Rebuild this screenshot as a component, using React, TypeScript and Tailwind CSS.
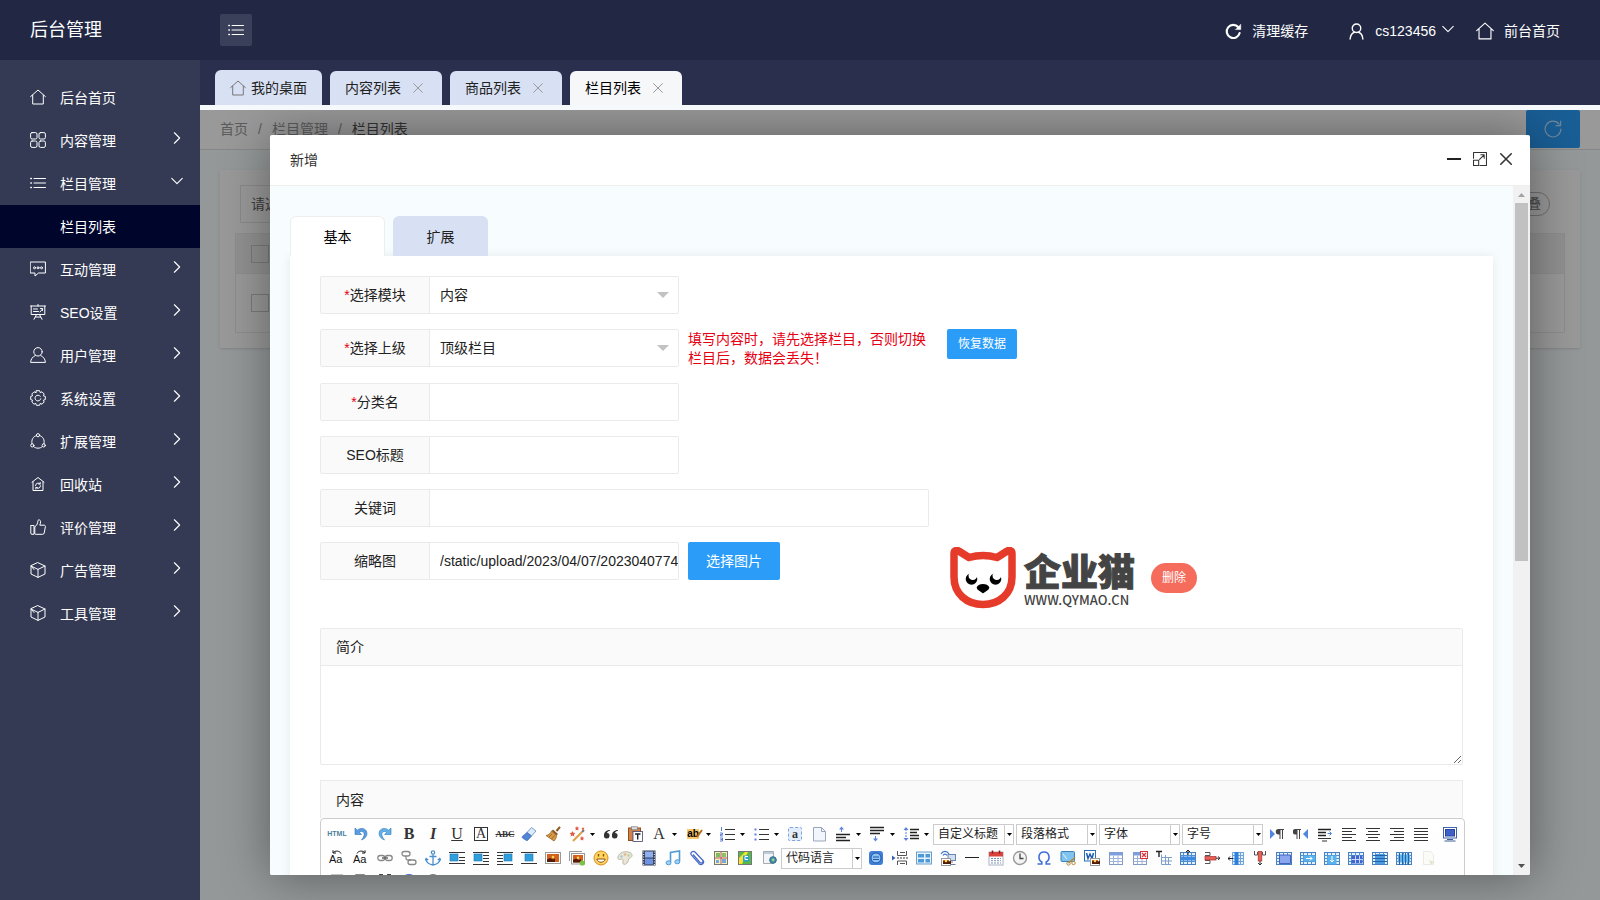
import { useState } from "react";
import type { ReactNode } from "react";

type LineIconProps = { children: ReactNode; className?: string; sw?: number };

function LineIcon({ children, className = "size-4", sw = 1 }: LineIconProps) {
  return (
    <svg
      viewBox="0 0 16 16"
      className={`${className} shrink-0`}
      fill="none"
      stroke="currentColor"
      strokeWidth={sw}
      strokeLinecap="round"
      strokeLinejoin="round"
      aria-hidden
    >
      {children}
    </svg>
  );
}

const homePaths = <path d="M.6 7.6 8 1l7.400 6.600M2.700 6.200v8.800h10.600V6.200" />;
const cubePaths = (
  <>
    <path d="M8 .7 15 4v8l-7 3.400L1 12V4z" />
    <path d="M1 4l7 3.400L15 4M8 7.400v8M1.500 4.500 4 7.500" />
  </>
);
const listPaths = (
  <>
    <path d="M4 3.500h11.500M4 8h11.500M4 12.500h11.500" />
    <path d="M.8 3.500h.6M.8 8h.6M.8 12.500h.6" strokeWidth={1.4} />
  </>
);

const menu: { label: string; icon: ReactNode; leaf?: boolean; children?: string[] }[] = [
  { label: "后台首页", leaf: true, icon: homePaths },
  {
    label: "内容管理",
    icon: (
      <>
        <rect x=".6" y=".6" width="6.400" height="6.400" rx="1.500" />
        <rect x="9" y=".6" width="6.400" height="6.400" rx="1.500" />
        <rect x=".6" y="9" width="6.400" height="6.400" rx="1.500" />
        <rect x="9" y="9" width="6.400" height="6.400" rx="1.500" />
      </>
    ),
  },
  { label: "栏目管理", children: ["栏目列表"], icon: listPaths },
  {
    label: "互动管理",
    icon: (
      <>
        <path d="M.6 1h14.800v11H8.500L5 15v-3H.6z" />
        <circle cx="4.500" cy="6.800" r="1" />
        <circle cx="8" cy="6.800" r="1" />
        <circle cx="11.500" cy="6.800" r="1" />
      </>
    ),
  },
  {
    label: "SEO设置",
    icon: (
      <>
        <path d="M.6 2h14.800M1.200 2v8.500h13.600V2M8 .5V2M3.500 5h4M3.500 7.500h5M10 8l2.500-3M10.500 4.500h2v2M6.500 10.500 4 15.300M9.500 10.500l2.500 4.800M5.500 13h5" />
      </>
    ),
  },
  {
    label: "用户管理",
    icon: (
      <>
        <circle cx="8" cy="4.800" r="4.200" />
        <path d="M5.200 8.600C2.500 9.800.8 12.200.6 15.400h14.800c-.2-3.200-1.900-5.600-4.600-6.800" />
      </>
    ),
  },
  {
    label: "系统设置",
    icon: (
      <>
        <path d="M6.400.7h3.200l.6 1.900 1.800-.8 2.200 2.200-.8 1.800 1.900.6v3.200l-1.900.6.8 1.800-2.200 2.200-1.800-.8-.6 1.900H6.400l-.6-1.900-1.800.8L1.800 12l.8-1.800-1.900-.6V6.400l1.900-.6L1.800 4 4 1.800l1.800.8z" />
        <path d="M10.300 6.300a2.900 2.900 0 1 0 .5 2.500" />
      </>
    ),
  },
  {
    label: "扩展管理",
    icon: (
      <>
        <circle cx="8" cy="2.200" r="1.600" />
        <circle cx="2.300" cy="12.400" r="1.600" />
        <circle cx="13.700" cy="12.400" r="1.600" />
        <path d="M6.400 2.600C2.800 3.500 1.200 7 2 10.800M9.600 2.600C13.200 3.500 14.800 7 14 10.800M3.600 13.600c2.500 2.200 6.300 2.200 8.800 0" />
      </>
    ),
  },
  {
    label: "回收站",
    icon: (
      <>
        <path d="M2 6.200 8 1.500l6 4.700M3 5.800v8.700h10V5.800" />
        <path d="M5.500 9.500A2.600 2.600 0 0 1 10 8M10.500 9.800A2.600 2.600 0 0 1 6 11.500M10.200 6.500V8H8.700M5.800 13v-1.500h1.500" />
      </>
    ),
  },
  {
    label: "评价管理",
    icon: (
      <>
        <path d="M1 6.500h3v8.800H1.800Q.8 15.300.8 14V7.500zM4.800 14.500V7.800C7 6.500 7.800 4 8 1.500c.2-1 2.600-1 2.600 1.300 0 1.200-.5 2.400-.8 3.400h4.400c1 0 1.300.8 1.200 1.500l-1.200 6.300c-.2.900-.8 1.300-1.600 1.300H6z" />
      </>
    ),
  },
  { label: "广告管理", icon: cubePaths },
  { label: "工具管理", icon: cubePaths },
];

const pageTabs = ["内容列表", "商品列表", "栏目列表"];

function Sidebar() {
  return (
    <nav className="w-[200px] shrink-0 bg-[#353a54] pt-4 text-sm text-white">
      <ul>
        {menu.map((item) => (
          <li key={item.label}>
            <a href="#" className="flex h-[43px] items-center pl-[30px] pr-4">
              <LineIcon className="mb-0.5 size-4">{item.icon}</LineIcon>
              <span className="ml-[14px] flex-1">{item.label}</span>
              {!item.leaf && (
                <LineIcon className="mb-1.5 size-[14px]">
                  {item.children ? (
                    <path d="m2 5 6 6 6-6" strokeWidth={1.3} />
                  ) : (
                    <path d="m5 2 6 6-6 6" strokeWidth={1.3} />
                  )}
                </LineIcon>
              )}
            </a>
            {item.children?.map((c) => (
              <a key={c} href="#" className="flex h-[43px] items-center bg-[#00052b] pl-[60px]">
                {c}
              </a>
            ))}
          </li>
        ))}
      </ul>
    </nav>
  );
}

function Header() {
  return (
    <header className="flex h-[60px] shrink-0 items-center bg-[#222844] text-white">
      <h1 className="w-[200px] shrink-0 pl-[30px] text-lg">后台管理</h1>
      <button
        type="button"
        aria-label="折叠菜单"
        className="ml-5 flex size-8 items-center justify-center rounded-xs bg-[#3a3f5a]"
      >
        <LineIcon>{listPaths}</LineIcon>
      </button>
      <div className="ml-auto flex items-center pr-10 pt-0.5 text-sm">
        <a href="#" className="flex items-center gap-[10px]">
          <LineIcon className="size-[17px]" sw={2}>
            <path d="M13.800 9.500A6.200 6.200 0 1 1 12.600 4" />
            <path d="M14.800 1.500v4.700h-4.700z" fill="currentColor" strokeWidth=".5" />
          </LineIcon>
          清理缓存
        </a>
        <button type="button" className="ml-10 flex items-center gap-[10px]">
          <LineIcon className="size-[17px]" sw={1.3}>
            <circle cx="8" cy="5" r="4" />
            <path d="M2 15c.3-3.500 1.800-5.500 4.200-6.300M14 15c-.3-3.500-1.800-5.500-4.200-6.300" />
          </LineIcon>
          <span>cs123456</span>
          <LineIcon className="-ml-1 mb-1 size-3">
            <path d="m1 4.500 7 7 7-7" strokeWidth={1.4} />
          </LineIcon>
        </button>
        <a href="#" className="ml-[22px] flex items-center gap-[10px]">
          <LineIcon className="size-[18px]">{homePaths}</LineIcon>
          前台首页
        </a>
      </div>
    </header>
  );
}

function PageTabs() {
  return (
    <div className="flex h-[50px] shrink-0 items-end gap-2 border-b-[5px] border-[#f6f9fc] bg-[#2a2f4e] pl-[15px] text-sm text-[#222]">
      <a href="#" className="flex h-[35px] items-center gap-[5px] rounded-t-md bg-[#d8e0f3] px-[15px]">
        <LineIcon className="size-4 text-[#777]">{homePaths}</LineIcon>
        我的桌面
      </a>
      {pageTabs.map((t) => (
        <div
          key={t}
          className={`flex h-[34px] items-center gap-3 rounded-t-md pl-[15px] pr-[19px] ${
            t === "栏目列表" ? "bg-[#f6f7f9] text-black" : "bg-[#d8e0f3]"
          }`}
        >
          <a href="#">{t}</a>
          <button type="button" aria-label={`关闭${t}`} className="text-[#999]">
            <LineIcon className="size-[10px]">
              <path d="m1 1 14 14M15 1 1 15" strokeWidth={1.6} />
            </LineIcon>
          </button>
        </div>
      ))}
    </div>
  );
}

function ListPage() {
  return (
    <div className="h-full bg-[#f7fdff] text-sm">
      <div className="flex h-10 items-start border-b border-[#e2e2e2] bg-white pl-5 pr-5">
        <div className="flex h-[38px] flex-1 items-center gap-[10px] text-[#999]">
          <a href="#">首页</a>
          <span>/</span>
          <a href="#">栏目管理</a>
          <span>/</span>
          <span className="text-[#555]">栏目列表</span>
        </div>
        <button
          type="button"
          aria-label="刷新"
          className="flex h-[38px] w-[54px] items-center justify-center rounded-xs bg-[#2b9df9] text-white/70"
        >
          <LineIcon className="size-[18px]">
            <path d="M15 8a7 7 0 1 1-1.500-4.300M14.800 1v4h-4" />
          </LineIcon>
        </button>
      </div>
      <div className="mx-5 mt-5 bg-white px-[15px] pb-[15px] pt-[15px] shadow-sm">
        <div className="flex items-center justify-between pl-[5px] pr-[15px]">
          <select aria-label="栏目" className="h-[38px] w-48 appearance-none border border-[#e6e6e6] pl-[10px] text-[#666]">
            <option>请选择栏目</option>
          </select>
          <button type="button" className="h-6 rounded-full border border-[#bbb] px-2 text-[13px] text-[#777]">
            折叠
          </button>
        </div>
        <table className="mt-[10px] w-full border border-[#ebebeb]">
          <thead className="bg-[#f2f2f2]">
            <tr className="h-10 border-b border-[#ebebeb]">
              <th className="pl-[15px] text-left">
                <input type="checkbox" aria-label="全选" className="block size-[18px] appearance-none border border-[#ccc]" />
              </th>
            </tr>
          </thead>
          <tbody>
            <tr className="h-[59px]">
              <td className="pl-[15px]">
                <input type="checkbox" aria-label="选择" className="block size-[18px] appearance-none border border-[#ccc]" />
              </td>
            </tr>
          </tbody>
        </table>
      </div>
    </div>
  );
}

type FieldProps = { id: string; label: string; required?: boolean; wide?: boolean; value?: string; options?: string[] };

function Field({ id, label, required, wide, value, options }: FieldProps) {
  return (
    <div
      className={`flex h-[38px] shrink-0 rounded-xs border border-[#eaeaea] ${wide ? "w-[609px]" : "w-[359px]"}`}
    >
      <label
        htmlFor={id}
        className="flex w-[109px] shrink-0 items-center justify-center border-r border-[#eaeaea] bg-[#fafafa]"
      >
        {required && <span className="text-[#e60012]">*</span>}
        {label}
      </label>
      {options ? (
        <div className="relative flex-1">
          <select id={id} className="size-full appearance-none bg-transparent pl-[10px] outline-none">
            {options.map((o) => (
              <option key={o}>{o}</option>
            ))}
          </select>
          <svg viewBox="0 0 12 6" className="pointer-events-none absolute right-[9px] top-[15px] h-[6px] w-3" aria-hidden>
            <path d="M0 0h12L6 6z" fill="#c2c2c2" />
          </svg>
        </div>
      ) : (
        <input id={id} type="text" defaultValue={value} className="min-w-0 flex-1 bg-transparent pl-[10px] outline-none" />
      )}
    </div>
  );
}

function CatLogo() {
  return (
    <div className="flex items-center gap-2">
      <svg viewBox="0 0 66 62" className="h-[62px] w-[66px]" aria-hidden>
        <path
          d="M4 6.500C4 3.500 7 2.500 9.500 4.500L19 10.500C28 7.800 38 7.800 47 10.500L56.500 4.500C59 2.500 62 3.500 62 6.500V30C62 47 49 57.500 33 57.500S4 47 4 30Z"
          fill="#fff"
          stroke="#e63b2b"
          strokeWidth="7.500"
          strokeLinejoin="round"
        />
        <circle cx="21.500" cy="32" r="5.800" fill="#000" />
        <circle cx="22.800" cy="28.700" r="4.300" fill="#fff" />
        <circle cx="45.500" cy="32" r="5.800" fill="#000" />
        <circle cx="46.800" cy="28.700" r="4.300" fill="#fff" />
        <path d="M28 39.500c2-2.500 8-2.500 10 0 2 2-1.500 3.500-5 6-3.500-2.500-7-4-5-6z" fill="#000" stroke="#000" strokeWidth="1.500" />
      </svg>
      <div className="flex flex-col text-[#444]">
        <span className="font-['Noto_Sans_CJK_SC',sans-serif] text-[37px] font-black leading-[44px] [-webkit-text-stroke:1px_#444]">
          企业猫
        </span>
        <span className="font-['Noto_Sans_CJK_SC',sans-serif] text-[13px] font-medium leading-4">WWW.QYMAO.CN</span>
      </div>
    </div>
  );
}

/* ---- editor toolbar ---- */

type Tool = { name: string; icon?: ReactNode; split?: boolean; combo?: boolean; gap?: boolean };

const serif = "font-['Liberation_Serif',serif] leading-none text-[#333]";

function Pic({ children }: { children: ReactNode }) {
  return (
    <svg viewBox="0 0 16 16" className="size-4" fill="none" aria-hidden>
      {children}
    </svg>
  );
}

function lines(d: string, color = "#333") {
  return <path d={d} stroke={color} strokeWidth="1" />;
}

function Grid({ fill, children }: { fill?: ReactNode; children?: ReactNode }) {
  return (
    <Pic>
      <rect x=".5" y="2.500" width="15" height="12" fill="#e4f1fb" stroke="#4a7fbf" />
      <path d="M.5 5.500h15M.5 8.500h15M.5 11.500h15M3.500 2.500v12M7.500 2.500v12M11.500 2.500v12" stroke="#4f8fd0" />
      {fill}
      {children}
    </Pic>
  );
}

const photo = (x: number, y: number, w: number, h: number) => (
  <>
    <rect x={x} y={y} width={w} height={h} fill="#fff" stroke="#999" />
    <rect x={x + 1.5} y={y + 1.5} width={w - 3} height={h - 3} fill="#d4611b" />
    <path d={`M${x + 1.5} ${y + h - 1.5}v-2.500l3-1.500 3 1.500 2-1v3.500z`} fill="#4e1c08" />
    <circle cx={x + w / 2} cy={y + h / 2 - 1} r="1.300" fill="#ffd75a" />
  </>
);
const floatPic = (x: number, d: string, y = 4) => (
  <Pic>
    <rect x={x} y={y} width="8" height="7" fill="#2f9fdb" stroke="#1b74b5" strokeWidth=".6" />
    {lines(d)}
  </Pic>
);

const row1: Tool[] = [
  { name: "源代码", icon: <span className="text-[7px] font-bold text-[#4b7e9c]">HTML</span> },
  {
    name: "撤销",
    icon: (
      <Pic>
        <path d="M2 2v6.500h6.500L6.300 6.300C9 4.500 12 6 11 9.500c-.4 1.700-1.300 3-2.500 4.500 4-1.500 6-4.500 5.300-7.700C13 2.500 8 1 4.300 4.200z" fill="#5a9de0" stroke="#2d70b8" strokeWidth=".6" />
      </Pic>
    ),
  },
  {
    name: "重做",
    icon: (
      <Pic>
        <path d="M14 2v6.500H7.500l2.200-2.200C7 4.500 4 6 5 9.500c.4 1.700 1.300 3 2.500 4.500-4-1.500-6-4.500-5.300-7.700C3 2.500 8 1 11.700 4.200z" fill="#63b0e6" stroke="#2d78b8" strokeWidth=".6" />
      </Pic>
    ),
  },
  { name: "加粗", icon: <span className={`${serif} text-base font-bold`}>B</span> },
  { name: "斜体", icon: <span className={`${serif} text-base font-bold italic`}>I</span> },
  { name: "下划线", icon: <span className={`${serif} text-base underline`}>U</span> },
  {
    name: "字符边框",
    icon: <span className={`${serif} flex size-[14px] items-center justify-center border border-[#333] text-sm`}>A</span>,
  },
  { name: "删除线", icon: <span className={`${serif} text-[9px] font-bold line-through`}>ABC</span> },
  {
    name: "清除格式",
    icon: (
      <Pic>
        <path d="M10.500 1.500 15 5l-4.500 5L6 6.500z" fill="#dcebfa" stroke="#7c9fc8" />
        <path d="M6 6.500l4.500 3.500-3.500 4q-1 1-2 .2L1.500 12q-.8-.8 0-1.700z" fill="#4f86d8" stroke="#3b69ad" strokeWidth=".7" />
      </Pic>
    ),
  },
  {
    name: "格式刷",
    icon: (
      <Pic>
        <path d="M15 .8 11.500 5" stroke="#8a5a1c" strokeWidth="2" />
        <path d="M8 3.500 13 8l-1.500 1.500-5-4.500z" fill="#8c5b2a" />
        <path d="M6.500 5 11.500 9.500c0 2-1 4-2.500 5.500L1 9.500C3.500 9 5.500 7.500 6.500 5z" fill="#d89a45" stroke="#8a5a1c" strokeWidth=".7" />
        <path d="M4 11l3-3M6.500 13l3-3.500" stroke="#8a5a1c" strokeWidth=".7" />
      </Pic>
    ),
  },
  {
    name: "自动排版",
    split: true,
    icon: (
      <Pic>
        <path d="M4 15 13 6" stroke="#e0a04a" strokeWidth="2.200" />
        <path d="M13 6l2-2" stroke="#777" strokeWidth="2.200" />
        <path d="m3.500 5 .9 1.800 2 .3L5 8.500l.3 2-1.800-1-1.800 1 .3-2L.6 7.100l2-.3zM8 0l.7 1.500 1.600.2-1.200 1.100.3 1.600L8 3.700l-1.400.7.3-1.600-1.200-1.100 1.600-.2zM13 10l.7 1.500 1.600.2-1.200 1.100.3 1.600-1.400-.7-1.400.7.3-1.600-1.200-1.100 1.600-.2zM14 1l.5 1 1 .2-.7.800.2 1-1-.5-1 .5.2-1-.7-.8 1-.2z" fill="#e25a42" />
      </Pic>
    ),
  },
  {
    name: "引用",
    icon: (
      <Pic>
        <path d="M7 4C3 4 .8 6.500 1 9.500A2.800 2.800 0 1 0 4 7c.3-1.200 1.500-2 3-2.200zM15 4c-4 0-6.200 2.500-6 5.500A2.800 2.800 0 1 0 12 7c.3-1.200 1.500-2 3-2.200z" fill="#333" />
      </Pic>
    ),
  },
  {
    name: "纯文本粘贴",
    icon: (
      <Pic>
        <rect x="1.500" y="2" width="12" height="12.500" fill="#d2824a" stroke="#8d4f22" />
        <rect x="4.500" y=".8" width="6" height="3" fill="#ddd" stroke="#777" strokeWidth=".7" />
        <rect x="6" y="5.500" width="9.500" height="10" fill="#fff" stroke="#446" strokeWidth=".8" />
        <path d="M8 8h5.500M10.700 8v5.500" stroke="#223" strokeWidth="1.400" />
      </Pic>
    ),
  },
  { name: "字体颜色", split: true, icon: <span className={`${serif} text-base`}>A</span> },
  {
    name: "背景色",
    split: true,
    icon: (
      <span className="relative bg-[#f8c76a] text-[10px] font-bold leading-[10px] text-black">
        ab
        <svg viewBox="0 0 8 10" className="absolute -right-1 top-0 h-[10px] w-2" aria-hidden>
          <path d="M7 1 2 8" stroke="#b06a1c" strokeWidth="2" />
        </svg>
      </span>
    ),
  },
  {
    name: "有序列表",
    split: true,
    icon: (
      <Pic>
        {lines("M6 3.500h10M6 8.500h10M6 13.500h10")}
        <path d="M2.500 1v4M1 7h2.500v1.500H1.500V10H4M1 12h2.500v3H1M1.500 13.500h2" stroke="#4a72d0" strokeWidth=".9" />
      </Pic>
    ),
  },
  {
    name: "无序列表",
    split: true,
    icon: (
      <Pic>
        {lines("M6 3.500h10M6 8.500h10M6 13.500h10")}
        <path d="M1.500 2.500h2v2h-2zM1.500 7.500h2v2h-2zM1.500 12.500h2v2h-2z" fill="#5b82dc" />
      </Pic>
    ),
  },
  {
    name: "全选",
    icon: (
      <span className="flex size-[14px] items-center justify-center rounded-xs border border-dashed border-[#7fa5e0] bg-[#e3edfb] font-['Liberation_Serif',serif] text-xs font-bold leading-none text-[#333]">
        a
      </span>
    ),
  },
  {
    name: "清空文档",
    icon: (
      <Pic>
        <path d="M2.500 1.500h8l4 4v9.500h-12z" fill="#f2f5fb" stroke="#9ba6bd" />
        <path d="M10.500 1.500v4h4" stroke="#9ba6bd" />
      </Pic>
    ),
  },
  {
    name: "段前距",
    split: true,
    icon: (
      <Pic>
        <path d="M6.500 6V2.500" stroke="#5b82dc" />
        <path d="M4 3.500 6.500.5 9 3.500z" fill="#5b82dc" />
        <path d="M1 8.500h14M1 11.500h10M1 14.500h14" stroke="#222" strokeWidth="1.400" />
      </Pic>
    ),
  },
  {
    name: "段后距",
    split: true,
    icon: (
      <Pic>
        <path d="M6.500 10v3.500" stroke="#5b82dc" />
        <path d="M4 12.500 6.500 15.500 9 12.500z" fill="#5b82dc" />
        <path d="M1 1.500h14M1 4.500h14M1 7.500h10" stroke="#222" strokeWidth="1.400" />
      </Pic>
    ),
  },
  {
    name: "行间距",
    split: true,
    icon: (
      <Pic>
        <path d="M3 3v10" stroke="#5b82dc" strokeDasharray="2 1" />
        <path d="M.5 4 3 1l2.500 3zM.5 12 3 15l2.500-3z" fill="#5b82dc" />
        <path d="M7 3.500h9M7 6.500h7M7 9.500h9M7 12.500h9" stroke="#222" strokeWidth="1.400" />
      </Pic>
    ),
  },
  { name: "自定义标题", combo: true },
  { name: "段落格式", combo: true },
  { name: "字体", combo: true },
  { name: "字号", combo: true },
  {
    name: "从左向右输入",
    icon: (
      <Pic>
        <path d="M1 3v10l5-5z" fill="#4f86e0" />
        <path d="M15 3H9.500a2.500 2.500 0 0 0 0 5.500h1V13h1V4h1.500v9h1V4h1z" fill="#444" />
      </Pic>
    ),
  },
  {
    name: "从右向左输入",
    icon: (
      <Pic>
        <path d="M15 3v10l-5-5z" fill="#4f86e0" />
        <path d="M8 3H2.500a2.500 2.500 0 0 0 0 5.500h1V13h1V4H6v9h1V4h1z" fill="#444" />
      </Pic>
    ),
  },
  {
    name: "首行缩进",
    icon: (
      <Pic>
        <path d="M1 3.500h13M1 6.500h8M1 9.500h8" stroke="#222" strokeWidth="1.500" />
        {lines("M1 12.500h13M5 15h5")}
        <path d="M10.500 7.500h4M12.500 5.500l2 2-2 2" stroke="#4f86e0" />
      </Pic>
    ),
  },
  { name: "居左对齐", icon: <Pic>{lines("M1 2.500h14M1 5.500h10M1 8.500h14M1 11.500h10M1 14.500h14")}</Pic> },
  { name: "居中对齐", icon: <Pic>{lines("M1 2.500h14M3 5.500h10M1 8.500h14M3 11.500h10M1 14.500h14")}</Pic> },
  { name: "居右对齐", icon: <Pic>{lines("M1 2.500h14M5 5.500h10M1 8.500h14M5 11.500h10M1 14.500h14")}</Pic> },
  { name: "两端对齐", icon: <Pic>{lines("M1 2.500h14M1 5.500h14M1 8.500h14M1 11.500h14M1 14.500h14")}</Pic> },
  {
    name: "全屏",
    gap: true,
    icon: (
      <Pic>
        <rect x="1.500" y="1.500" width="13" height="10.500" fill="#fff" stroke="#3d64ad" />
        <rect x="3.500" y="3.500" width="9" height="6.500" fill="#3c62c9" stroke="#28449c" />
        <path d="M5 13.500h6M2.500 15h11" stroke="#3f5d94" />
      </Pic>
    ),
  },
];

const row2: Tool[] = [
  {
    name: "字母大写",
    icon: (
      <Pic>
        <text x="0" y="13" fontSize="11" fill="#111" fontFamily="Liberation Sans">Aa</text>
        <path d="M12 3.500C11 .8 6 .3 4.500 2.500M4 .3v2.700h3" stroke="#111" />
      </Pic>
    ),
  },
  {
    name: "字母小写",
    icon: (
      <Pic>
        <text x="0" y="13" fontSize="11" fill="#111" fontFamily="Liberation Sans">Aa</text>
        <path d="M4 3.500C5 .8 10 .3 11.500 2.500M12 .3v2.700H9" stroke="#111" />
      </Pic>
    ),
  },
  {
    name: "超链接",
    icon: (
      <Pic>
        <rect x=".8" y="5.500" width="7" height="5" rx="2.500" stroke="#888" strokeWidth="1.300" />
        <rect x="8.200" y="5.500" width="7" height="5" rx="2.500" stroke="#888" strokeWidth="1.300" />
        <path d="M5 8h6" stroke="#666" strokeWidth="1.300" />
      </Pic>
    ),
  },
  {
    name: "取消链接",
    icon: (
      <Pic>
        <rect x="1" y="1.500" width="8" height="4.500" rx="2.200" stroke="#888" strokeWidth="1.300" />
        <path d="M5 6v2.500q0 1.500 2 1.500h3" stroke="#888" strokeWidth="1.300" />
        <rect x="7" y="10" width="8" height="4.500" rx="2.200" stroke="#888" strokeWidth="1.300" />
      </Pic>
    ),
  },
  {
    name: "锚点",
    icon: (
      <Pic>
        <circle cx="8" cy="2.500" r="1.700" stroke="#4b8fd0" strokeWidth="1.200" />
        <path d="M8 4.200v10.500M4.500 6.500h7M1 9c.5 3.500 3 5.500 7 6 4-.5 6.500-2.500 7-6M0 10.500 1.200 8.500l2 1.500M16 10.500 14.800 8.500l-2 1.500" stroke="#4b8fd0" strokeWidth="1.300" />
      </Pic>
    ),
  },
  { name: "默认", icon: floatPic(1, "M0 2.500h16M10 7.500h6M10 10.500h6M0 13.500h16") },
  { name: "左浮动", icon: floatPic(1, "M0 2.500h16M10 5.500h6M10 8.500h6M10 11.500h6M0 14.500h16") },
  { name: "右浮动", icon: floatPic(7, "M0 2.500h16M0 5.500h6M0 8.500h6M0 11.500h6M0 14.500h16") },
  { name: "居中", icon: floatPic(4, "M0 2.500h16M0 13.500h16") },
  { name: "单图上传", icon: <Pic>{photo(0.5, 2.5, 15, 11)}</Pic> },
  {
    name: "多图上传",
    icon: (
      <Pic>
        <path d="M.5 11V1.500H13" stroke="#999" />
        {photo(2.5, 3.5, 13, 10.5)}
        <circle cx="13.300" cy="13" r="2.600" fill="#7dc242" />
      </Pic>
    ),
  },
  {
    name: "表情",
    icon: (
      <Pic>
        <circle cx="8" cy="8" r="7" fill="#ffd75e" stroke="#d98a1e" />
        <path d="M3.800 9c.8 4.300 7.600 4.300 8.400 0z" fill="#fff" stroke="#8d4d10" />
        <path d="M5.500 4v2.500M10.500 4v2.500" stroke="#8d4d10" strokeWidth="1.400" />
      </Pic>
    ),
  },
  {
    name: "涂鸦",
    icon: (
      <Pic>
        <path d="M1 7C2 2.500 8 .5 13 2.500c3 1.500 2.500 4.500 0 5.500s-1 3-3 5-4.500 2-4-1-.5-3-2.500-2.500S.5 8.500 1 7z" fill="#e9e6d8" stroke="#bdb9a6" />
        <circle cx="4.500" cy="6.500" r="1.200" fill="#9ec6e0" />
        <circle cx="8" cy="4.500" r="1.200" fill="#e5b08d" />
        <circle cx="11.500" cy="5.500" r="1.200" fill="#b7d79a" />
      </Pic>
    ),
  },
  {
    name: "视频",
    icon: (
      <Pic>
        <rect x="1.500" y=".5" width="13" height="15" fill="#333b55" />
        <rect x="4" y="1.500" width="8" height="6" fill="#8fb0ee" />
        <rect x="4" y="8.500" width="8" height="6" fill="#6d92e0" />
        <path d="M2.700 1.500v14M13.300 1.500v14" stroke="#fff" strokeDasharray="1 1.500" />
      </Pic>
    ),
  },
  {
    name: "音乐",
    icon: (
      <Pic>
        <path d="M5.500 12V2.500l9-1.500v10" stroke="#4f9bd8" strokeWidth="1.600" />
        <ellipse cx="3.500" cy="12.800" rx="2.500" ry="2" fill="#9fd0f5" stroke="#4f9bd8" />
        <ellipse cx="12.300" cy="11.800" rx="2.500" ry="2" fill="#9fd0f5" stroke="#4f9bd8" />
      </Pic>
    ),
  },
  {
    name: "附件",
    icon: (
      <Pic>
        <path d="M4 4.500l7 8c1.500 1.500 4-.5 2.500-2.500L6 2C4 .2.500 2.500 2.500 5.200l7.500 8.500c2.500 2.300 6-.7 4-3.700" stroke="#4468c8" strokeWidth="1.200" />
      </Pic>
    ),
  },
  {
    name: "Google地图",
    icon: (
      <Pic>
        <rect x="1.500" y="1.500" width="13" height="13" fill="#f5efb8" stroke="#777" />
        <path d="M3 3h4v4H3z" fill="#7dbb5d" />
        <path d="M9 9h4v4H9zM3 10h3v3H3z" fill="#78a8e0" />
        <path d="M9 3h4v4H9z" fill="#8fc06a" />
        <path d="M8 2v12M2 8h12" stroke="#a25" strokeWidth=".7" />
      </Pic>
    ),
  },
  {
    name: "百度地图",
    icon: (
      <Pic>
        <rect x="1.500" y="1.500" width="13" height="13" fill="#58b947" stroke="#777" />
        <path d="M2 14V8l6-6h3L5 14z" fill="#f7e42f" />
        <path d="M6 5.500h6v6H6z" fill="#28a0d8" />
        <path d="M11 6.500H8v3h3" stroke="#fff" />
      </Pic>
    ),
  },
  {
    name: "插入Iframe",
    icon: (
      <Pic>
        <path d="M2.500 1.500h10v12h-10z" fill="#f1f4f8" stroke="#aaa" />
        <path d="M3 3h9" stroke="#bcd" strokeWidth="2" />
        <circle cx="12" cy="10" r="3.300" fill="#4c91a8" stroke="#2c6a80" />
        <path d="M10.500 9.500l1.500-1 1.500 1-1 2z" fill="#9ddb9a" />
      </Pic>
    ),
  },
  { name: "代码语言", combo: true },
  {
    name: "插入代码",
    icon: (
      <Pic>
        <rect x="1" y="1" width="14" height="14" rx="3" fill="#3f7fd6" />
        <circle cx="8" cy="8" r="5" fill="#8cc4f5" stroke="#1f56a8" />
        <path d="M5 7h6M5 9.500h6" stroke="#1f56a8" />
      </Pic>
    ),
  },
  {
    name: "分页",
    icon: (
      <Pic>
        <path d="M5.500 1v4.500h9V1M5.500 15v-4h9v4M8 2.500h5M8 13.500h5" stroke="#555" />
        <path d="M5 8h11" stroke="#333" strokeDasharray="2 1" />
        <path d="M0 5.500v5L3.500 8z" fill="#3c62a9" />
      </Pic>
    ),
  },
  {
    name: "模板",
    icon: (
      <Pic>
        <rect x=".5" y="2" width="15" height="12" fill="#e5f2fc" stroke="#6d9ecb" />
        <path d="M2 4h6v3.500H2zM9.500 4H14v3.500H9.500zM2 9h6v3.500H2zM9.500 9H14v3.500H9.500z" fill="#4e9ad6" />
      </Pic>
    ),
  },
  {
    name: "图片转存",
    icon: (
      <Pic>
        <path d="M1 4c2-3.500 6-3.500 8 0M3 5.500c1-1.800 3-1.800 4 0" stroke="#3d6fc4" strokeWidth="1.200" />
        <rect x="8" y="4.500" width="7.500" height="6" fill="#cfe0f2" stroke="#6b87ab" />
        {photo(1.5, 8.5, 9, 7)}
        <path d="M12 11v2M10.500 14.500h5" stroke="#6b87ab" />
      </Pic>
    ),
  },
  { name: "分隔线", icon: <Pic>{lines("M1 7.500h14", "#222")}</Pic> },
  {
    name: "日期",
    icon: (
      <Pic>
        <rect x="1" y="2" width="14" height="13" fill="#fff" stroke="#a9b4c4" />
        <path d="M1 2h14v4.500H1z" fill="#d9433a" />
        <path d="M4.500.5v3M11.500.5v3" stroke="#8b1d17" strokeWidth="1.500" />
        <path d="M3 8.500h10M3 10.700h10M3 13h10" stroke="#7d93b8" strokeDasharray="2 1" />
      </Pic>
    ),
  },
  {
    name: "时间",
    icon: (
      <Pic>
        <circle cx="8" cy="8" r="6.500" fill="#f4f4f4" stroke="#999" strokeWidth="1.400" />
        <path d="M8 3.500V8.500h3.500" stroke="#444" strokeWidth="1.300" />
      </Pic>
    ),
  },
  {
    name: "特殊字符",
    icon: (
      <Pic>
        <path d="M1.500 14h4.300v-2C1.500 9.500 2 2 8 2s6.500 7.500 2.200 10v2h4.300" stroke="#3f6fd8" strokeWidth="1.600" />
      </Pic>
    ),
  },
  {
    name: "截图",
    icon: (
      <Pic>
        <rect x="1" y="1.500" width="13.500" height="10" rx="1" fill="#7fc3ee" stroke="#3f7fb8" />
        <path d="M3 4l4 5M3 13.500h6" stroke="#e8f6ff" />
        <path d="M15 7.500 8.500 13" stroke="#b5893c" strokeWidth="1.500" />
        <circle cx="8.500" cy="13.500" r="1.700" stroke="#b5893c" />
        <circle cx="13.500" cy="13" r="1.700" stroke="#b5893c" />
      </Pic>
    ),
  },
  {
    name: "Word图片转存",
    icon: (
      <Pic>
        <rect x=".5" y=".5" width="11" height="10.500" fill="#fff" stroke="#2c6cb5" />
        <path d="M2.500 3 4 8.500l2-4.500 2 4.500L9.500 3" stroke="#1d5ab0" strokeWidth="1.500" />
        {photo(6.5, 8.5, 9, 7)}
      </Pic>
    ),
  },
  {
    name: "插入表格",
    icon: (
      <Pic>
        <rect x="1.500" y="2.500" width="13" height="12" fill="#fff" stroke="#8298c0" />
        <path d="M1.500 2.500h13v3h-13z" fill="#7d9fe0" />
        <path d="M1.500 8.500h13M1.500 11.500h13M5.500 5.500v9M10 5.500v9" stroke="#9db2d8" />
      </Pic>
    ),
  },
  {
    name: "删除表格",
    icon: (
      <Pic>
        <rect x="1.500" y="2.500" width="13" height="12" fill="#fff" stroke="#8298c0" />
        <path d="M1.500 2.500h13v3h-13z" fill="#7d9fe0" />
        <path d="M1.500 8.500h13M1.500 11.500h13M5.500 5.500v9M10 5.500v9" stroke="#9db2d8" />
        <rect x="8.500" y="1.500" width="7" height="7" fill="#fff" stroke="#d8343c" />
        <path d="m10 3 4 4M14 3l-4 4" stroke="#d8343c" strokeWidth="1.300" />
      </Pic>
    ),
  },
  {
    name: "表格前插入行",
    icon: (
      <Pic>
        <path d="M0 1.500h6M3 1.500V7" stroke="#222" strokeWidth="1.400" />
        <path d="M5.500 4.500v10H15M5.500 7.500H16M5.500 11H16M9.500 5v10M12.500 7v8" stroke="#7fa0cc" />
      </Pic>
    ),
  },
  {
    name: "前插入行",
    icon: (
      <Grid fill={<path d="M1 6.500h14v4H1z" fill="#3e8ae0" />}>
        <path d="M8 0v5M6 2l2-2 2 2" stroke="#222" />
      </Grid>
    ),
  },
  {
    name: "删除行",
    icon: (
      <Pic>
        <path d="M1 2.500h5v3H1M1 13.500h5v-3H1" stroke="#555" />
        <rect x="1" y="6.500" width="11" height="3.500" fill="#e5625b" stroke="#a92e2a" strokeWidth=".7" />
        <path d="M12 8.200h3.500M14 6.500l2 1.700-2 1.700" stroke="#333" />
      </Pic>
    ),
  },
  {
    name: "前插入列",
    icon: (
      <Pic>
        <path d="M4.500 2.500h11v12h-11zM4.500 5.500h11M4.500 8.500h11M4.500 11.500h11M12.500 2.500v12" fill="#e4f1fb" stroke="#6fa3d8" />
        <path d="M6.500 2h4v13h-4z" fill="#2f7fdc" />
        <path d="M0 8.500h5M2 6.500l-2 2 2 2" stroke="#222" />
      </Pic>
    ),
  },
  {
    name: "删除列",
    icon: (
      <Pic>
        <path d="M2.500 1v4h3V2M13.500 1v4h-3V2" stroke="#555" />
        <rect x="6.200" y="1.500" width="3.600" height="9.500" fill="#e5625b" stroke="#a92e2a" strokeWidth=".7" />
        <path d="M8 11v4M6 13l2 2 2-2" stroke="#333" />
      </Pic>
    ),
  },
  { name: "合并多个单元格", icon: <Grid fill={<path d="M3.500 5h11v8.500h-11z" fill="#8ba6ee" stroke="#4363bd" />} /> },
  {
    name: "右合并单元格",
    icon: (
      <Grid fill={<path d="M3.500 5.500h12v6h-12z" fill="#58b2ee" />}>
        <path d="M6 8.500h6M10 6.500l2 2-2 2" stroke="#fff" />
      </Grid>
    ),
  },
  {
    name: "下合并单元格",
    icon: (
      <Grid fill={<path d="M3.500 5.500h9v9h-9z" fill="#58b2ee" />}>
        <path d="M8 6v6M6 10l2 2 2-2" stroke="#fff" />
      </Grid>
    ),
  },
  {
    name: "完全拆分单元格",
    icon: (
      <Grid fill={<path d="M3.500 5.500h11v8h-11z" fill="#4065cc" />}>
        <path d="M7.500 5.500v8M11.500 5.500v8M3.500 9.500h11" stroke="#c5d6ff" />
      </Grid>
    ),
  },
  {
    name: "拆分成行",
    icon: (
      <Grid fill={<path d="M3 4h10v10H3z" fill="#4d9be0" />}>
        <path d="M1 5.500h14M1 8.500h14M1 11.500h14" stroke="#2562a8" />
      </Grid>
    ),
  },
  {
    name: "拆分成列",
    icon: (
      <Grid fill={<path d="M2 4.500h12v8H2z" fill="#63b4ea" />}>
        <path d="M3.500 3v12M6.500 3v12M9.500 3v12M12.500 3v12" stroke="#2562a8" />
      </Grid>
    ),
  },
  {
    name: "图表",
    icon: (
      <Pic>
        <path d="M3.500 1.500h7l3 3v10h-10z" fill="#fbfbf8" stroke="#ebebe6" />
        <path d="M9 10l5 2-3 3z" fill="#dfe6cc" />
      </Pic>
    ),
  },
];

const row3: Tool[] = [
  { name: "打印", icon: <Pic><rect x="2" y=".5" width="12" height="10" fill="#888" /></Pic> },
  { name: "预览", icon: <Pic><path d="M2.500.5h9v12h-9z" fill="#fff" stroke="#888" /></Pic> },
  { name: "查询替换", icon: <Pic><path d="M2 0h4v8H2zM10 0h4v8h-4z" fill="#444" /></Pic> },
  { name: "帮助", icon: <Pic><circle cx="8" cy="8" r="8" fill="#4468c8" /></Pic> },
  { name: "草稿箱", icon: <Pic><circle cx="8" cy="8" r="7.500" fill="#ddd" stroke="#777" /></Pic> },
];

function ToolRow({ tools }: { tools: Tool[] }) {
  return (
    <div className="flex h-6 items-center">
      {tools.map((t) =>
        t.combo ? (
          <div key={t.name} className="relative mr-[2px] h-[21px] w-[81px] shrink-0 border border-[#ccc] bg-white">
            <select aria-label={t.name} className="block size-full appearance-none bg-transparent pl-1 text-xs leading-[19px] outline-none">
              <option>{t.name}</option>
            </select>
            <div className="pointer-events-none absolute inset-y-0 right-0 flex w-[9px] items-center justify-center border-l border-[#ccc]">
              <svg viewBox="0 0 5 3" className="h-[3px] w-[5px] shrink-0" aria-hidden>
                <path d="M0 0h5L2.500 3z" fill="#000" />
              </svg>
            </div>
          </div>
        ) : (
          <button
            key={t.name}
            type="button"
            title={t.name}
            aria-label={t.name}
            className={`flex h-6 shrink-0 items-center ${t.split ? "w-[34px] pl-1" : "w-6 justify-center"} ${t.gap ? "ml-[5px]" : ""}`}
          >
            {t.split ? (
              <>
                <span className="flex w-4 justify-center">{t.icon}</span>
                <svg viewBox="0 0 5 3" className="ml-[5px] h-[3px] w-[5px]" aria-hidden>
                  <path d="M0 0h5L2.500 3z" fill="#000" />
                </svg>
              </>
            ) : (
              t.icon
            )}
          </button>
        ),
      )}
    </div>
  );
}

function ColumnForm() {
  return (
    <form className="bg-white px-[30px] pt-5 shadow-[0_0_10px_rgba(0,0,0,0.08)]" onSubmit={(e) => e.preventDefault()}>
      <div className="flex flex-col gap-[15px]">
        <Field id="module" label="选择模块" required options={["内容"]} />
        <div className="flex items-start gap-[9px]">
          <Field id="parent" label="选择上级" required options={["顶级栏目"]} />
          <p className="w-[250px] pr-2 pt-px leading-[19px] text-[#e60012]">
            填写内容时，请先选择栏目，否则切换栏目后，数据会丢失！
          </p>
          <button type="button" className="h-[30px] rounded-xs bg-[#2b9df9] px-[11px] text-xs text-white">
            恢复数据
          </button>
        </div>
        <Field id="name" label="分类名" required />
        <Field id="seo" label="SEO标题" />
        <Field id="keywords" label="关键词" wide />
        <div className="flex items-start gap-[9px]">
          <Field id="thumb" label="缩略图" value="/static/upload/2023/04/07/202304077432.png" />
          <div className="w-[250px]">
            <button type="button" className="h-[38px] rounded-xs bg-[#2b9df9] px-[18px] text-white">
              选择图片
            </button>
          </div>
          <div className="flex h-[71px] items-center gap-4 pl-[3px]">
            <CatLogo />
            <button type="button" className="h-[30px] rounded-full bg-[#f56c5d] px-[11px] text-xs text-white">
              删除
            </button>
          </div>
        </div>
        <div className="rounded-xs border border-[#eaeaea]">
          <label htmlFor="intro" className="flex h-[37px] items-center border-b border-[#eaeaea] bg-[#fafafa] px-[15px]">
            简介
          </label>
          <textarea id="intro" className="block h-[98px] w-full resize-y px-[10px] py-1.5 outline-none" />
        </div>
        <div>
          <div className="flex h-[38px] items-center border border-b-0 border-[#eaeaea] bg-[#fafafa] px-[15px]">内容</div>
          <div className="-mr-[2px] rounded-t-sm border border-[#ccc] bg-gradient-to-b from-white to-[#f4f4f4] pl-1 pt-[3px] text-[#222]">
            <ToolRow tools={row1} />
            <ToolRow tools={row2} />
            <ToolRow tools={row3} />
            <div className="h-72 bg-white" />
          </div>
        </div>
      </div>
    </form>
  );
}

function Modal() {
  const [tab, setTab] = useState("基本");
  return (
    <div
      role="dialog"
      aria-labelledby="dlg-title"
      className="flex min-h-0 flex-1 flex-col overflow-hidden rounded-xs bg-white text-sm text-[#222] shadow-[1px_1px_50px_rgba(0,0,0,0.4)]"
    >
      <div className="flex h-[51px] shrink-0 items-center border-b border-[#eee] pl-5 pr-[17px]">
        <h2 id="dlg-title" className="flex-1 text-[#333]">
          新增
        </h2>
        <div className="flex items-center gap-3 pb-0.5 text-[#333]">
          <button type="button" aria-label="最小化" className="flex h-4 items-center">
            <span className="h-[2px] w-[14px] bg-[#222]" />
          </button>
          <button type="button" aria-label="最大化">
            <LineIcon className="size-[14px]">
              <path d="M.6 7V.6h14.800v14.800H8M.6 9.500h5.900v5.900H.6zM7.500 8.500l5-5M9 3.200h3.800V7" strokeWidth={1.2} />
            </LineIcon>
          </button>
          <button type="button" aria-label="关闭">
            <LineIcon className="size-[14px]">
              <path d="m2 2 12 12M14 2 2 14" strokeWidth={1.8} />
            </LineIcon>
          </button>
        </div>
      </div>
      <div className="flex min-h-0 flex-1">
        <div className="min-w-0 flex-1 overflow-hidden bg-[#f7fdff] px-5 pt-[30px]">
          <div role="tablist" className="flex gap-2">
            {["基本", "扩展"].map((t) => (
              <button
                key={t}
                type="button"
                role="tab"
                aria-selected={t === tab}
                onClick={() => setTab(t)}
                className={`h-10 w-[95px] rounded-t-md border border-b-0 ${
                  t === tab ? "border-[#eee] bg-white text-black" : "border-[#d8e0f3] bg-[#d8e0f3]"
                }`}
              >
                {t}
              </button>
            ))}
          </div>
          <ColumnForm />
        </div>
        <div className="flex w-[17px] shrink-0 flex-col items-center bg-[#f1f1f1]" aria-hidden>
          <svg viewBox="0 0 17 17" className="size-[17px] shrink-0">
            <path d="M5 11h7L8.500 7z" fill="#a3a3a3" />
          </svg>
          <div className="h-[52%] w-[13px] bg-[#c1c1c1]" />
          <svg viewBox="0 0 17 17" className="mt-auto size-[17px] shrink-0">
            <path d="M5 6h7l-3.500 4z" fill="#505050" />
          </svg>
        </div>
      </div>
    </div>
  );
}

export default function App() {
  return (
    <div className="flex h-screen flex-col overflow-hidden font-['Liberation_Sans','Noto_Sans_CJK_SC',sans-serif]">
      <Header />
      <div className="flex min-h-0 flex-1">
        <Sidebar />
        <main className="flex min-w-0 flex-1 flex-col">
          <PageTabs />
          <div className="relative min-h-0 flex-1 overflow-hidden">
            <ListPage />
            <div className="absolute inset-0 flex bg-black/40 px-[70px] py-[25px]">
              <Modal />
            </div>
          </div>
        </main>
      </div>
    </div>
  );
}
